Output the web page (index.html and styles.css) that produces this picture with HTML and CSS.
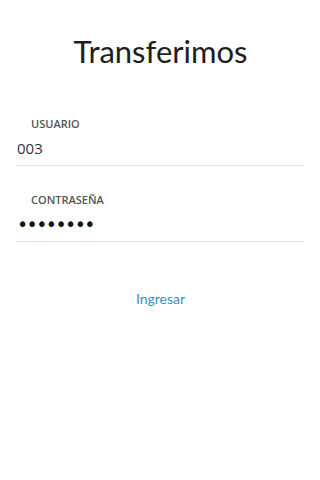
FILE: index.html
```html
<!DOCTYPE html>
<html lang="es">

<head>
    <meta charset="UTF-8">
    <meta name="viewport" content="width=device-width, initial-scale=1.0">
    <title>Transferimos</title>
    <link rel="stylesheet" href="styles.css">
</head>

<body>
    <div class="login">
        <h1 class="title">Transferimos</h1>
        <div class="field">
            <label class="field-label" for="user">USUARIO</label>
            <input class="field-input" id="user" type="text" value="003">
        </div>
        <div class="field">
            <label class="field-label" for="pass">CONTRASEÑA</label>
            <input class="field-input password" id="pass" type="password" value="12345678">
        </div>
        <div class="actions">
            <button class="btn-login">Ingresar</button>
        </div>
    </div>
</body>

</html>
```

FILE: styles.css
```css
body {
    margin: 0;
    background: #fff;
    font-family: Lato, "Open Sans", sans-serif;
    color: #222;
}

.login {
    display: flex;
    flex-direction: column;
    padding: 0 16px 0 17px;
}

.title {
    margin: 29px 0 0 0;
    text-align: center;
    font-weight: 400;
    font-size: 31px;
    line-height: 44px;
    color: #1e1e1e;
}

.field {
    display: flex;
    flex-direction: column;
    border-bottom: 1px solid #e2e2e2;
}

.field:first-of-type {
    margin-top: 44px;
}

.field + .field {
    margin-top: 27px;
}

.field-label {
    padding-left: 14px;
    font-family: "Open Sans", sans-serif;
    font-size: 11px;
    font-weight: 600;
    line-height: 14px;
    color: #555;
}

.field-input {
    border: 0;
    outline: none;
    padding: 0;
    margin: 8px 0 8px 0;
    height: 18px;
    font-family: "Open Sans", sans-serif;
    font-size: 15px;
    color: #333;
    background: transparent;
}

.password {
    font-family: "DejaVu Sans", sans-serif;
    font-size: 19px;
    letter-spacing: -1.6px;
    color: #111;
}

.actions {
    display: flex;
    justify-content: center;
    margin-top: 47px;
}

.btn-login {
    border: 0;
    background: none;
    font-family: Lato, sans-serif;
    font-size: 14px;
    color: #3c8fc0;
    cursor: pointer;
}
```
